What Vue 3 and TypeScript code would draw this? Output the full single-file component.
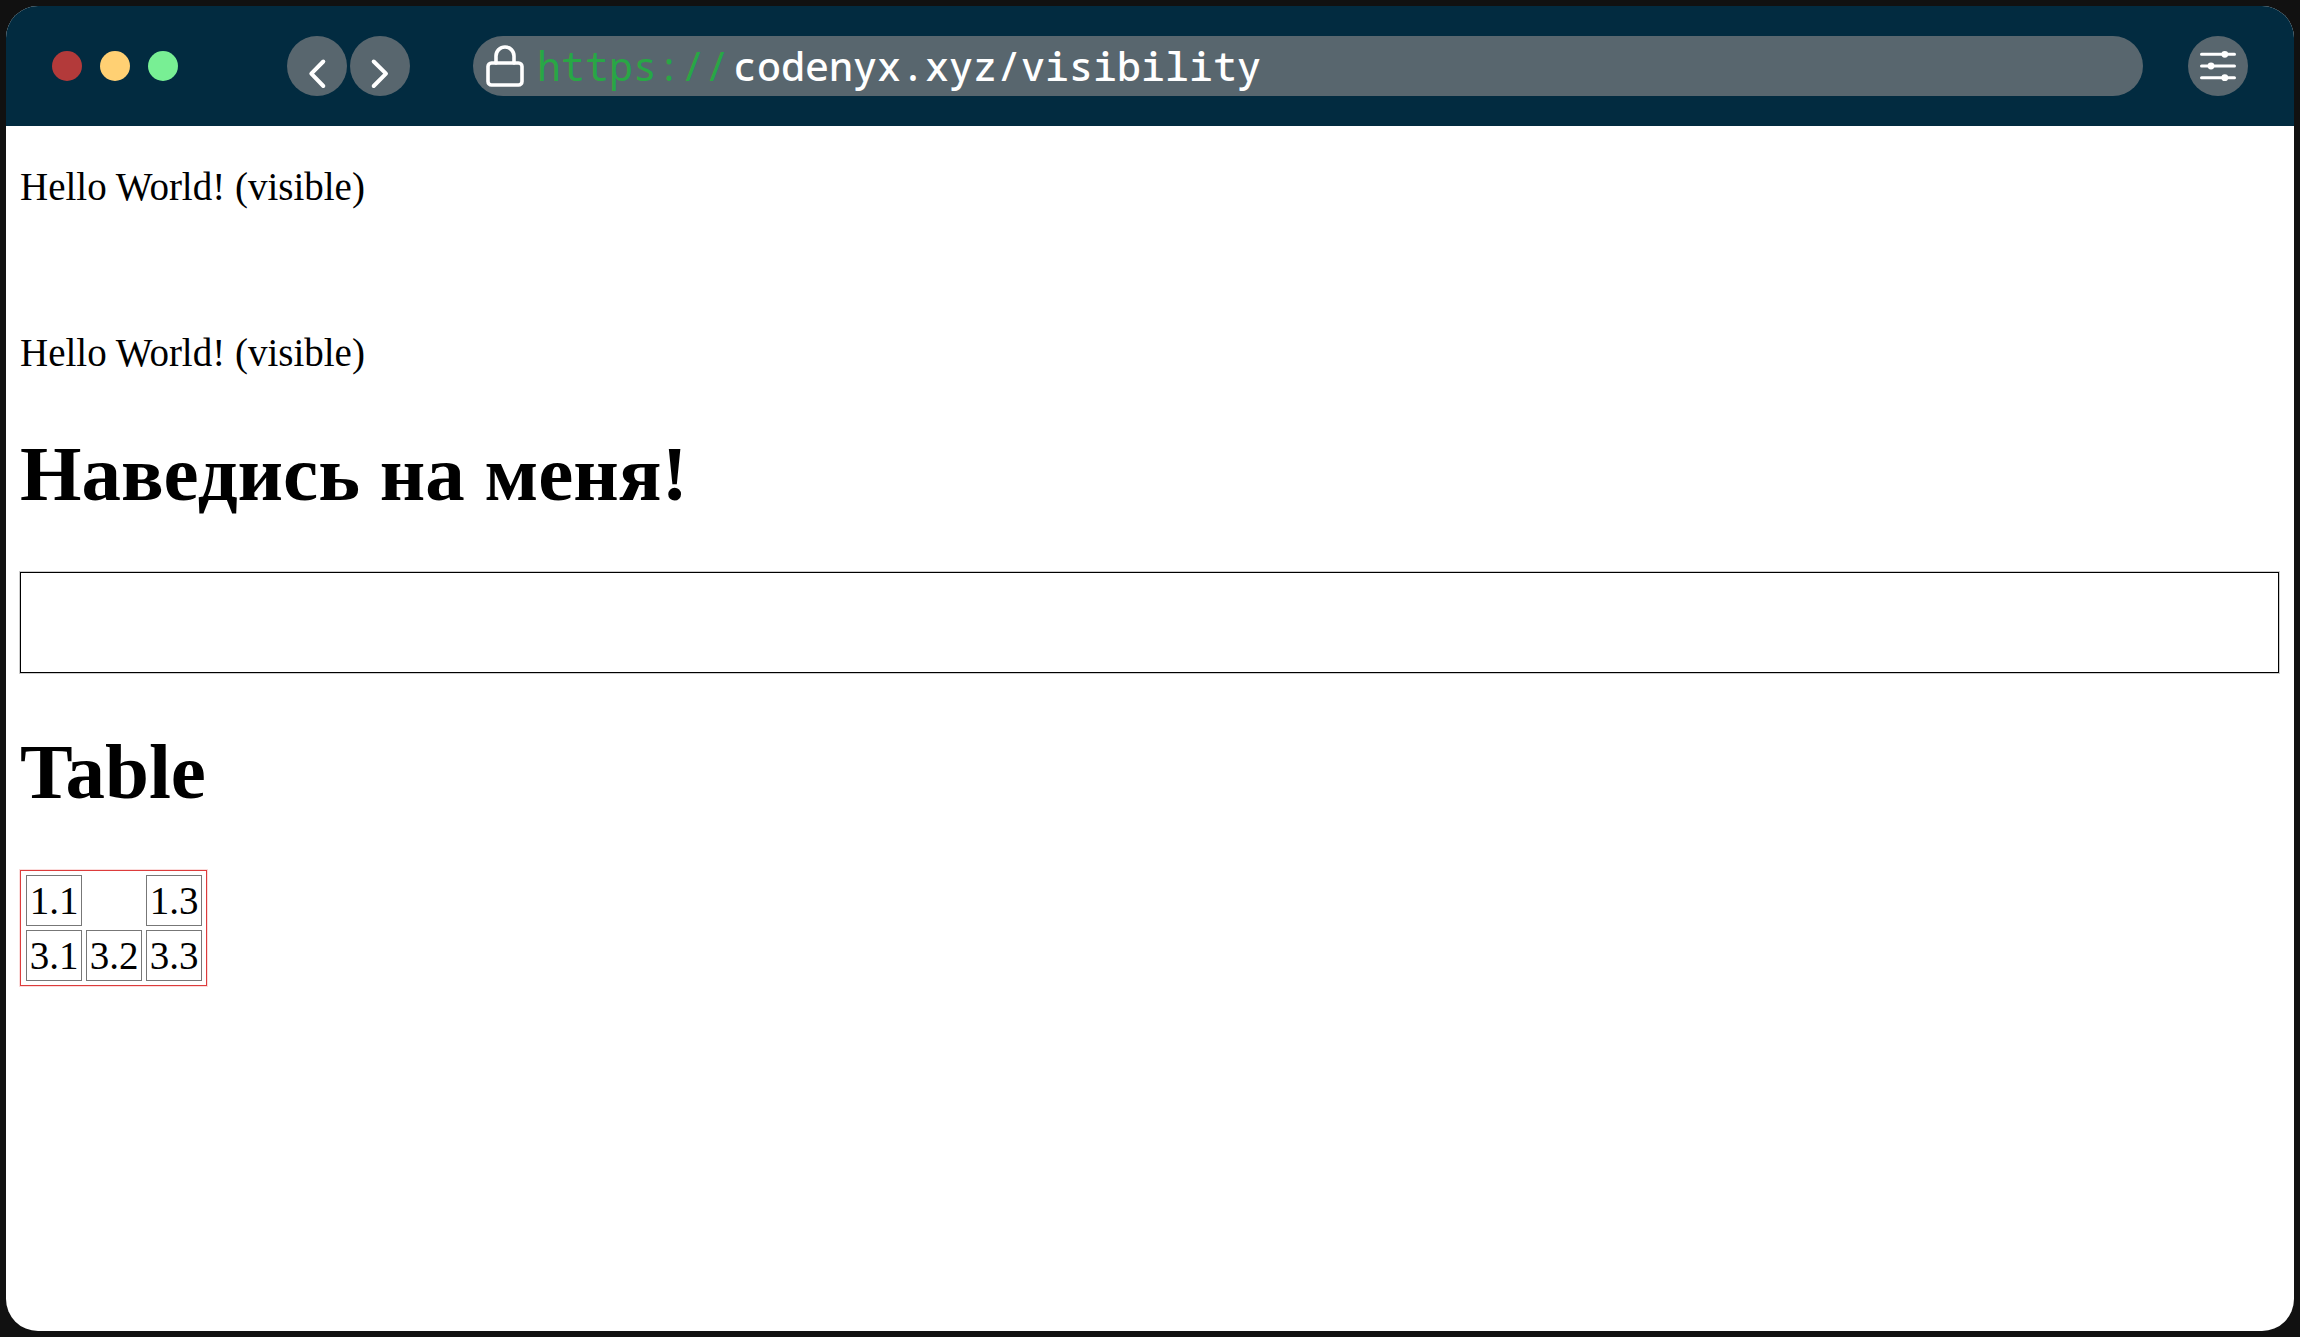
<script setup lang="ts">
import { ref } from 'vue'

interface Cell {
  text: string
  hidden?: boolean
}

const address = ref('codenyx.xyz/visibility')
const revealed = ref(false)

const controls = [
  { name: 'close', label: 'Close' },
  { name: 'minimize', label: 'Minimize' },
  { name: 'expand', label: 'Expand' },
]

const rows: Cell[][] = [
  [{ text: '1.1' }, { text: '', hidden: true }, { text: '1.3' }],
  [{ text: '3.1' }, { text: '3.2' }, { text: '3.3' }],
]
</script>

<template>
  <div class="frame">
    <div class="window">
      <header class="toolbar">
        <div class="controls">
          <button
            v-for="control in controls"
            :key="control.name"
            type="button"
            class="dot"
            :class="control.name"
            :aria-label="control.label"
          ></button>
        </div>
        <nav class="history">
          <button type="button" class="round" aria-label="Back">
            <svg viewBox="0 0 60 60" class="arrow"><path d="M36.3 25.5 24.3 37.7l12 12.3" /></svg>
          </button>
          <button type="button" class="round" aria-label="Forward">
            <svg viewBox="0 0 60 60" class="arrow"><path d="M23.7 25.5l12.3 12.2-12.3 12.3" /></svg>
          </button>
        </nav>
        <div class="address">
          <svg viewBox="0 0 38 42" class="lock" aria-hidden="true">
            <rect x="2" y="18" width="34" height="22" rx="3.5" />
            <path d="M10 18v-7a9 9 0 0 1 18 0v7" />
          </svg>
          <label class="scheme" for="address">https://</label>
          <input id="address" v-model="address" class="url" type="text" spellcheck="false" />
        </div>
        <button type="button" class="round" aria-label="Settings">
          <svg viewBox="0 0 60 60" class="sliders">
            <path d="M13.5 18.3h33M13.5 30h33M13.5 41.7h33" />
            <circle cx="36.8" cy="18.3" r="3.4" />
            <circle cx="23" cy="30" r="3.4" />
            <circle cx="36.8" cy="41.7" r="3.4" />
          </svg>
        </button>
      </header>
      <main class="page">
        <p>Hello World! (visible)</p>
        <p class="hidden">&nbsp;</p>
        <p>Hello World! (visible)</p>
        <h1 @mouseenter="revealed = true" @mouseleave="revealed = false">Наведись на меня!</h1>
        <div class="box" :class="{ revealed }"></div>
        <h1>Table</h1>
        <table>
          <tbody>
            <tr v-for="(row, r) in rows" :key="r">
              <td v-for="(cell, c) in row" :key="c" :class="{ hidden: cell.hidden }">{{ cell.text }}</td>
            </tr>
          </tbody>
        </table>
      </main>
    </div>
  </div>
</template>

<style>
body {
  margin: 0;
  background: #111;
}
</style>

<style scoped>
.frame {
  box-sizing: border-box;
  display: flex;
  min-height: 100vh;
  padding: 6px;
  background: #111;
}

.window {
  flex: 1;
  min-width: 0;
  border-radius: 32px;
  overflow: hidden;
  background: #fff;
}

.toolbar {
  box-sizing: border-box;
  display: flex;
  align-items: center;
  height: 120px;
  padding: 0 46px;
  background: #022b40;
}

button {
  padding: 0;
  border: 0;
  border-radius: 50%;
}

.controls {
  display: flex;
  gap: 18px;
}

.dot {
  width: 30px;
  height: 30px;
}

.close {
  background: #b33a3a;
}

.minimize {
  background: #ffd073;
}

.expand {
  background: #78ef94;
}

.history {
  display: flex;
  gap: 3px;
  margin: 0 63px 0 109px;
}

.round {
  flex: none;
  width: 60px;
  height: 60px;
  background: #58666e;
}

svg {
  display: block;
  fill: none;
  stroke: #fff;
  stroke-linecap: round;
  stroke-linejoin: round;
}

.arrow {
  stroke-width: 4;
}

.sliders {
  stroke-width: 3;
}

.sliders circle {
  fill: #fff;
  stroke: none;
}

.address {
  box-sizing: border-box;
  display: flex;
  flex: 1;
  align-items: center;
  height: 60px;
  min-width: 0;
  margin-right: 45px;
  padding: 0 30px 0 13px;
  border-radius: 30px;
  background: #58666e;
  font: 40px/60px "Noto Sans Mono", "DejaVu Sans Mono", monospace;
}

.lock {
  flex: none;
  width: 38px;
  height: 42px;
  margin-right: 13px;
  stroke-width: 3.6;
}

.scheme {
  margin-right: 4px;
  color: #28a745;
}

.url {
  flex: 1;
  min-width: 0;
  height: 60px;
  padding: 0;
  border: 0;
  outline: 0;
  background: none;
  color: #fff;
  font: inherit;
  font-weight: 500;
}

.page {
  padding: 0 15px 39px 14px;
  color: #000;
  font: 39px/44px "Liberation Serif", "Times New Roman", serif;
}

p {
  margin: 39px 0;
}

h1 {
  margin: 55px 0 54px;
  font-size: 79px;
  line-height: 88px;
}

.hidden {
  visibility: hidden;
}

.box {
  box-sizing: border-box;
  height: 101px;
  border: 1px solid #000;
  box-shadow: 0 0 0 1px #ccc;
}

.box.revealed {
  background: #eee;
}

table {
  padding-left: 1px;
  border: 1px solid #dc3c3c;
  border-spacing: 4px;
  box-shadow: 0 0 0 1px #fbdcdc;
}

td {
  box-sizing: border-box;
  width: 56px;
  padding: 3px 2px;
  border: 1px solid #777;
  line-height: 43px;
  text-align: center;
}
</style>
